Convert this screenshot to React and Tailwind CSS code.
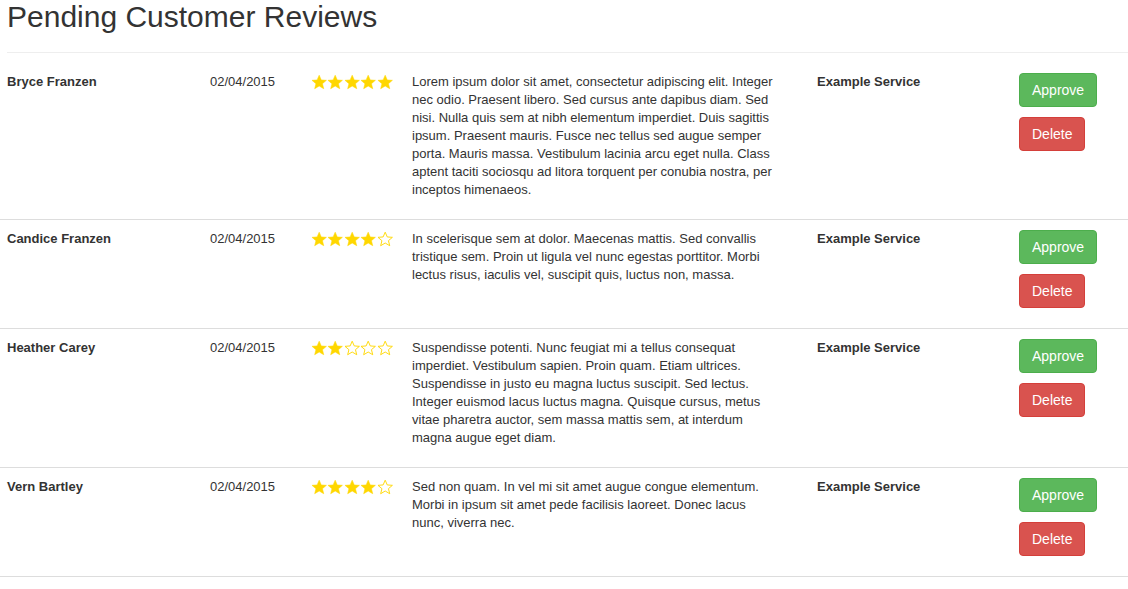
import React from "react";

const REVIEWS = [
  {
    name: "Bryce Franzen",
    date: "02/04/2015",
    rating: 5,
    text: "Lorem ipsum dolor sit amet, consectetur adipiscing elit. Integer nec odio. Praesent libero. Sed cursus ante dapibus diam. Sed nisi. Nulla quis sem at nibh elementum imperdiet. Duis sagittis ipsum. Praesent mauris. Fusce nec tellus sed augue semper porta. Mauris massa. Vestibulum lacinia arcu eget nulla. Class aptent taciti sociosqu ad litora torquent per conubia nostra, per inceptos himenaeos.",
    service: "Example Service",
  },
  {
    name: "Candice Franzen",
    date: "02/04/2015",
    rating: 4,
    text: "In scelerisque sem at dolor. Maecenas mattis. Sed convallis tristique sem. Proin ut ligula vel nunc egestas porttitor. Morbi lectus risus, iaculis vel, suscipit quis, luctus non, massa.",
    service: "Example Service",
  },
  {
    name: "Heather Carey",
    date: "02/04/2015",
    rating: 2,
    text: "Suspendisse potenti. Nunc feugiat mi a tellus consequat imperdiet. Vestibulum sapien. Proin quam. Etiam ultrices. Suspendisse in justo eu magna luctus suscipit. Sed lectus. Integer euismod lacus luctus magna. Quisque cursus, metus vitae pharetra auctor, sem massa mattis sem, at interdum magna augue eget diam.",
    service: "Example Service",
  },
  {
    name: "Vern Bartley",
    date: "02/04/2015",
    rating: 4,
    text: "Sed non quam. In vel mi sit amet augue congue elementum. Morbi in ipsum sit amet pede facilisis laoreet. Donec lacus nunc, viverra nec.",
    service: "Example Service",
  },
];

const Star = ({ filled }) => (
  <svg width="16.4" height="16" viewBox="0 0 24 24" className="shrink-0">
    <path
      d="M12 1.8l3.1 7.1 7.7.6-5.9 5 1.9 7.6L12 18l-6.8 4.1 1.9-7.6-5.9-5 7.7-.6z"
      fill={filled ? "#ffd700" : "#ffffff"}
      stroke="#ffd700"
      strokeWidth={filled ? 0.8 : 1.4}
      strokeLinejoin="round"
    />
  </svg>
);

const Stars = ({ rating }) => (
  <div className="flex items-center">
    {[1, 2, 3, 4, 5].map((i) => (
      <Star key={i} filled={i <= rating} />
    ))}
  </div>
);

export default function App() {
  return (
    <div
      className="w-[1128px] bg-white text-[#333] text-[13px] leading-[18px]"
      style={{ fontFamily: '"Liberation Sans", Arial, sans-serif' }}
    >
      {/* Header */}
      <div className="pl-[7px]">
        <div className="pb-[9px] border-b border-[#eee]">
          <h1 className="text-[30px] leading-[33px] font-normal mb-[10px]">
            Pending Customer Reviews
          </h1>
        </div>
      </div>

      {/* Rows */}
      <div className="mt-[10px]">
        {REVIEWS.map((r, i) => (
          <div
            key={i}
            className="grid grid-cols-[202px_101px_101px_405px_202px_1fr] pt-[10px] pb-[10px] border-b border-[#ddd]"
          >
            <div className="pl-[7px] pr-2 font-bold">{r.name}</div>
            <div className="px-2">{r.date}</div>
            <div className="px-2 pt-[1px]">
              <Stars rating={r.rating} />
            </div>
            <div className="px-2">
              <p className="w-[365px] mb-[10px]">{r.text}</p>
            </div>
            <div className="px-2 font-bold">{r.service}</div>
            <div className="px-2 flex flex-col items-start">
              <button className="mb-[10px] px-3 py-[6px] text-[14px] leading-[20px] text-white bg-[#5cb85c] border border-[#4cae4c] rounded">
                Approve
              </button>
              <button className="mb-[10px] px-3 py-[6px] text-[14px] leading-[20px] text-white bg-[#d9534f] border border-[#d43f3a] rounded">
                Delete
              </button>
            </div>
          </div>
        ))}
      </div>
    </div>
  );
}
